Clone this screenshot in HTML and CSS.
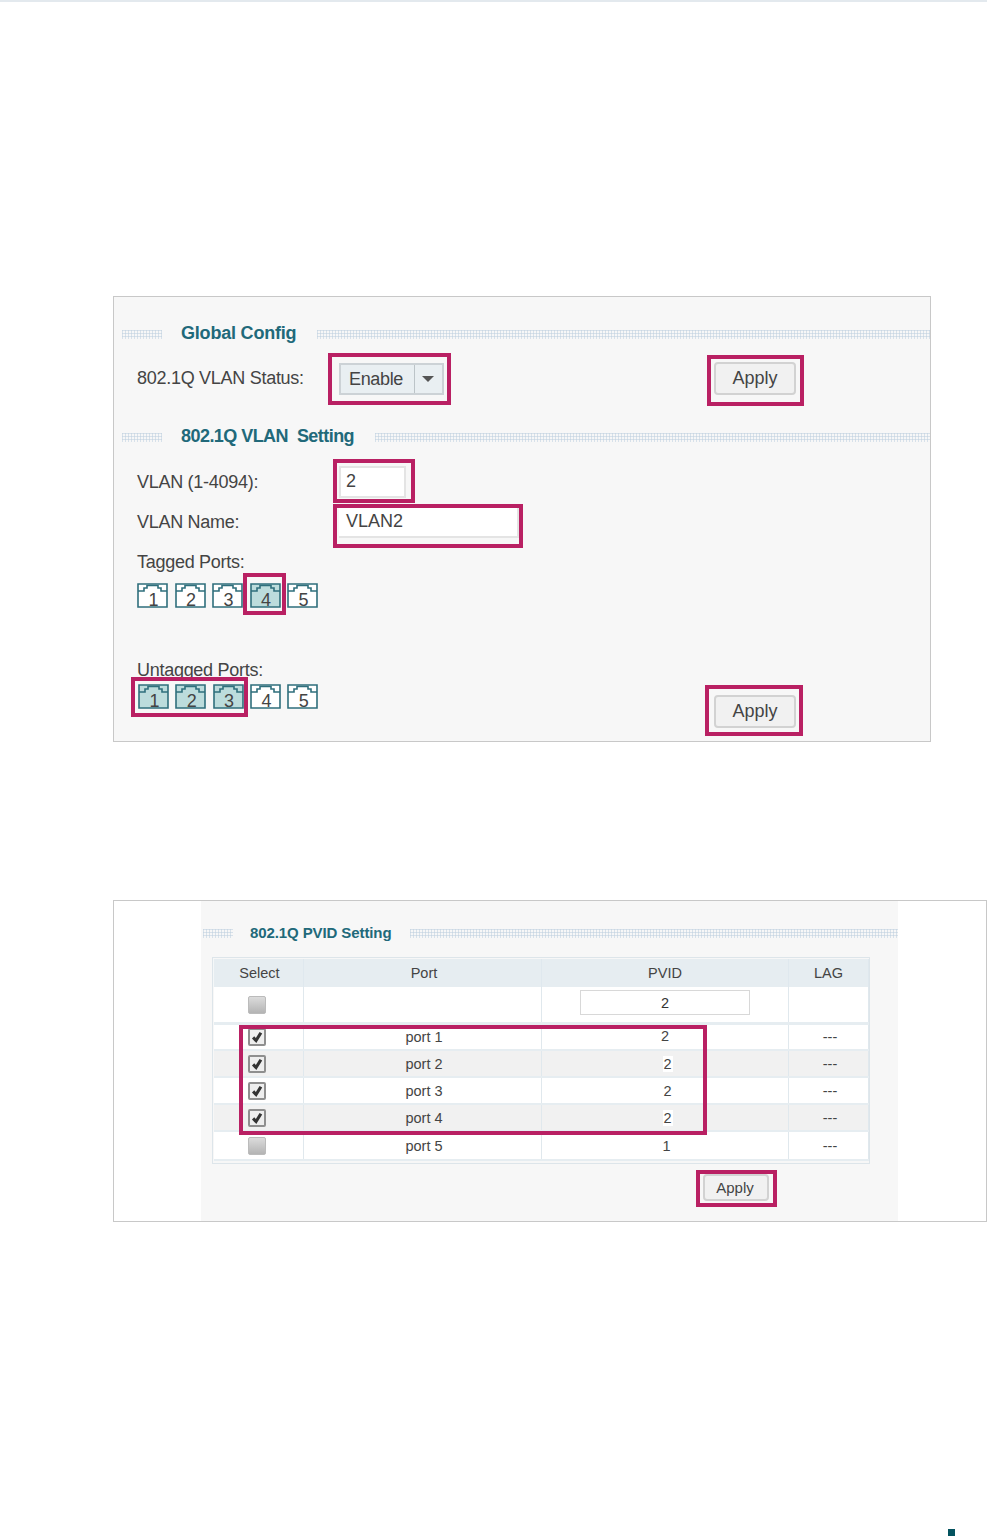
FILE: index.html
```html
<!DOCTYPE html>
<html lang="en">
<head>
    <meta charset="UTF-8">
    <meta name="viewport" content="width=device-width, initial-scale=1.0">
    <title>802.1Q VLAN Configuration</title>
    <link rel="stylesheet" href="styles.css">
</head>
<body>
    <svg class="defs" width="0" height="0" aria-hidden="true">
        <symbol id="rj45" viewBox="0 0 31 25">
            <path d="M1 1H30V24H1Z"/>
            <path d="M1 8H7V5H10V2.5H21V5H24V8H30"/>
        </symbol>
        <symbol id="tick" viewBox="0 0 18 18">
            <path d="M4 9.5L7.8 13.5L14 3.5" />
        </symbol>
    </svg>

    <div class="top-line"></div>

    <div class="panel panel-vlan">
        <div class="section-head">
            <span class="dots dots-short"></span>
            <span class="section-title">Global Config</span>
            <span class="dots"></span>
        </div>
        <div class="form-row status-row">
            <span class="label">802.1Q VLAN Status:</span>
            <div class="select">
                <span class="select-value">Enable</span>
                <span class="select-arrow"></span>
            </div>
            <button class="button apply">Apply</button>
        </div>

        <div class="section-head second-head">
            <span class="dots dots-short"></span>
            <span class="section-title tight-title">802.1Q VLAN&nbsp; Setting</span>
            <span class="dots"></span>
        </div>
        <div class="form-row vlan-row">
            <span class="label">VLAN (1-4094):</span>
            <div class="input input-id">2</div>
        </div>
        <div class="form-row name-row">
            <span class="label name-label">VLAN Name:</span>
            <div class="input input-name">VLAN2</div>
        </div>

        <div class="form-row ports-label tagged-label"><span class="label">Tagged Ports:</span></div>
        <div class="ports tagged-ports">
            <div class="port"><svg><use href="#rj45"/></svg><span>1</span></div>
            <div class="port"><svg><use href="#rj45"/></svg><span>2</span></div>
            <div class="port"><svg><use href="#rj45"/></svg><span>3</span></div>
            <div class="port on"><svg><use href="#rj45"/></svg><span>4</span></div>
            <div class="port"><svg><use href="#rj45"/></svg><span>5</span></div>
        </div>

        <div class="form-row ports-label untagged-label"><span class="label">Untagged Ports:</span></div>
        <div class="ports untagged-ports">
            <div class="port on"><svg><use href="#rj45"/></svg><span>1</span></div>
            <div class="port on"><svg><use href="#rj45"/></svg><span>2</span></div>
            <div class="port on"><svg><use href="#rj45"/></svg><span>3</span></div>
            <div class="port"><svg><use href="#rj45"/></svg><span>4</span></div>
            <div class="port"><svg><use href="#rj45"/></svg><span>5</span></div>
            <button class="button apply apply-low">Apply</button>
        </div>

        <div class="mark mark-status"></div>
        <div class="mark mark-apply-top"></div>
        <div class="mark mark-vlan"></div>
        <div class="mark mark-name"></div>
        <div class="mark mark-tagged"></div>
        <div class="mark mark-untagged"></div>
        <div class="mark mark-apply-low"></div>
    </div>

    <div class="panel panel-pvid">
        <div class="inner">
            <div class="section-head pvid-head">
                <span class="dots dots-pvid"></span>
                <span class="section-title small-title">802.1Q PVID Setting</span>
                <span class="dots"></span>
            </div>
            <div class="table-wrap">
                <table class="pvid-table">
                    <thead>
                        <tr><th class="col-select">Select</th><th class="col-port">Port</th><th class="col-pvid">PVID</th><th>LAG</th></tr>
                    </thead>
                    <tbody>
                        <tr class="row-all">
                            <td><span class="check"></span></td>
                            <td></td>
                            <td><div class="input-pvid">2</div></td>
                            <td></td>
                        </tr>
                        <tr>
                            <td><span class="check checked"><svg><use href="#tick"/></svg></span></td>
                            <td class="port-name">port 1</td><td class="first-value">2</td><td class="lag">---</td>
                        </tr>
                        <tr class="alt">
                            <td><span class="check checked"><svg><use href="#tick"/></svg></span></td>
                            <td class="port-name">port 2</td><td><span class="edited">2</span></td><td class="lag">---</td>
                        </tr>
                        <tr>
                            <td><span class="check checked"><svg><use href="#tick"/></svg></span></td>
                            <td class="port-name">port 3</td><td><span class="edited">2</span></td><td class="lag">---</td>
                        </tr>
                        <tr class="alt">
                            <td><span class="check checked"><svg><use href="#tick"/></svg></span></td>
                            <td class="port-name">port 4</td><td><span class="edited">2</span></td><td class="lag">---</td>
                        </tr>
                        <tr class="last">
                            <td><span class="check"></span></td>
                            <td class="port-name">port 5</td><td><span class="edited plain">1</span></td><td class="lag">---</td>
                        </tr>
                    </tbody>
                </table>
            </div>
            <button class="button apply-small">Apply</button>
        </div>
        <div class="mark mark-rows"></div>
        <div class="mark mark-apply-small"></div>
    </div>

    <div class="page-mark"></div>
</body>
</html>
```

FILE: styles.css
```css
body {
    font-family: "Liberation Sans", Arial, sans-serif;
    margin: 0;
    background-color: #fff;
    color: #444;
}
.defs {
    position: absolute;
}
.top-line {
    height: 2px;
    background-color: #e3e9ee;
}
.panel {
    position: relative;
    box-sizing: border-box;
    margin-left: 113px;
    border: 1px solid #c8c8c8;
}
.panel-vlan {
    width: 818px;
    height: 446px;
    margin-top: 294px;
    padding-top: 26px;
    background-color: #f7f7f7;
}
.panel-pvid {
    width: 874px;
    height: 322px;
    margin-top: 158px;
    background-color: #fff;
}

/* section headings */
.section-head {
    display: flex;
    align-items: center;
    height: 22px;
    padding-left: 8px;
}
.second-head {
    margin-top: 31px;
}
.dots {
    flex: 1;
    height: 9px;
    background-image:
        linear-gradient(90deg, rgba(190, 208, 224, 0.55) 1px, transparent 1px),
        linear-gradient(rgba(190, 208, 224, 0.55) 1px, transparent 1px);
    background-size: 3px 3px;
}
.dots-short {
    flex: none;
    width: 40px;
}
.section-title {
    margin: 0 21px 2px 19px;
    font-size: 18px;
    font-weight: bold;
    letter-spacing: -0.2px;
    color: #21697a;
    white-space: nowrap;
}
.tight-title {
    letter-spacing: -0.55px;
}

/* form rows */
.form-row {
    display: flex;
    align-items: center;
    padding: 0 134px 0 23px;
}
.label {
    flex: none;
    width: 202px;
    font-size: 18px;
    letter-spacing: -0.28px;
    white-space: nowrap;
}
.name-label {
    margin-bottom: 2px;
}
.status-row {
    height: 33px;
    margin-top: 17px;
}
.vlan-row {
    height: 32px;
    margin-top: 18px;
}
.name-row {
    height: 30px;
    margin-top: 10px;
}
.select {
    display: flex;
    box-sizing: border-box;
    width: 105px;
    height: 32px;
    border: 2px solid #ccd2d6;
    background-color: #e9eff2;
    font-size: 18px;
    letter-spacing: -0.35px;
}
.select-value {
    flex: 1;
    padding-left: 8px;
    line-height: 28px;
    border-right: 1px solid #bcc4c8;
}
.select-arrow {
    position: relative;
    width: 27px;
}
.select-arrow::after {
    content: "";
    position: absolute;
    left: 7px;
    top: 11px;
    border: 6px solid transparent;
    border-top: 6px solid #555;
    border-bottom: 0;
}
.input {
    box-sizing: border-box;
    border: 2px solid #e4e4e4;
    background-color: #fff;
    font-size: 18px;
}
.input-id {
    width: 67px;
    height: 32px;
    padding-left: 5px;
    line-height: 26px;
}
.input-name {
    width: 180px;
    height: 30px;
    padding-left: 7px;
    line-height: 26px;
    border-top: 0;
    border-left: 0;
}
.button {
    box-sizing: border-box;
    border: 2px solid #d2d2d2;
    border-radius: 4px;
    background-color: #f1f1f1;
    color: #444;
    font-family: inherit;
    padding: 0;
}
.apply {
    width: 82px;
    height: 33px;
    margin-left: auto;
    font-size: 18px;
}

/* port icons */
.ports-label {
    height: 20px;
}
.tagged-label {
    margin-top: 14px;
}
.untagged-label {
    margin-top: 52px;
}
.ports {
    display: flex;
    gap: 6.5px;
    padding: 0 134px 0 23px;
}
.tagged-ports {
    margin-top: 11px;
    height: 25px;
}
.untagged-ports {
    margin-top: 4px;
    padding-left: 24px;
    align-items: flex-start;
}
.untagged-ports .port + .port {
    margin-left: -0.2px;
}
.apply-low {
    margin-top: 11px;
}
.port {
    position: relative;
    flex: none;
    width: 31px;
    height: 25px;
}
.port svg {
    display: block;
    width: 31px;
    height: 25px;
    fill: #fff;
    stroke: #2f6f7c;
    stroke-width: 1.6;
}
.port.on svg {
    fill: #bcdcdc;
}
.port span {
    position: absolute;
    left: 2px;
    right: 0;
    bottom: -2px;
    text-align: center;
    font-size: 18px;
    line-height: 20px;
    color: #444;
}

/* PVID table */
.inner {
    box-sizing: border-box;
    width: 697px;
    height: 320px;
    margin-left: 87px;
    padding-top: 21px;
    background-color: #f7f7f7;
}
.pvid-head {
    padding-left: 2px;
}
.dots-pvid {
    flex: none;
    width: 30px;
}
.small-title {
    margin: 0 19px 2px 17px;
    font-size: 15px;
    letter-spacing: -0.1px;
}
.table-wrap {
    box-sizing: border-box;
    width: 658px;
    height: 207px;
    margin: 13px 0 0 11px;
    padding: 1px 0 0 0;
    border: 1px solid #dde5ea;
}
.pvid-table {
    width: 656px;
    table-layout: fixed;
    border-collapse: collapse;
    font-size: 14.5px;
    color: #444;
    text-align: center;
}
.pvid-table th {
    box-sizing: border-box;
    height: 28px;
    padding: 0;
    font-weight: normal;
    background-color: #e6edf1;
    border-left: 1px solid #f4f7f8;
    border-right: 1px solid #dfe8ee;
}
.pvid-table .col-select {
    width: 90px;
    padding-left: 2px;
}
.pvid-table .col-port {
    width: 238px;
    padding-left: 3px;
}
.col-pvid {
    width: 247px;
}
.pvid-table td {
    height: 27px;
    padding: 0;
    background-color: #fff;
    border-right: 1px solid #e0e8ed;
    border-bottom: 2px solid #e6edf1;
    box-sizing: border-box;
}
.pvid-table .row-all td {
    height: 36px;
    border-bottom: 3px solid #e6edf1;
}
.pvid-table .alt td {
    background-color: #f1f1f1;
}
.pvid-table .last td {
    height: 29px;
}
.pvid-table .port-name {
    padding-left: 3px;
}
.pvid-table .lag {
    padding-left: 3px;
}
.pvid-table .first-value {
    padding-bottom: 2px;
}
.check {
    display: block;
    box-sizing: border-box;
    width: 18px;
    height: 18px;
    margin: 1px 0 0 34px;
    border: 1px solid #bbb;
    border-radius: 2px;
    background-image: linear-gradient(#dcdcdc, #b4b4b4);
}
.check.checked {
    border: 2px solid #8f8f8f;
    background-image: none;
    background-color: #eee;
}
.check svg {
    display: block;
    width: 14px;
    height: 14px;
    fill: none;
    stroke: #333;
    stroke-width: 4;
}
.input-pvid {
    box-sizing: border-box;
    width: 170px;
    height: 25px;
    margin: 0 auto 3px;
    border: 1px solid #d8d8d8;
    background-color: #fff;
    line-height: 24px;
    color: #333;
}
.edited {
    display: inline-block;
    width: 10px;
    margin-left: 5px;
    background-color: #fff;
}
.edited.plain {
    margin-left: 3px;
    background-color: transparent;
}
.apply-small {
    display: block;
    width: 66px;
    height: 27px;
    margin: 10px 0 0 502px;
    padding-right: 2px;
    font-size: 15px;
}

/* highlight boxes lying over the screenshots */
.mark {
    position: absolute;
    box-sizing: border-box;
    border: 4px solid #b92063;
}
.mark-status {
    left: 214px;
    top: 56px;
    width: 123px;
    height: 52px;
}
.mark-apply-top {
    left: 593px;
    top: 58px;
    width: 97px;
    height: 51px;
}
.mark-vlan {
    left: 219px;
    top: 162px;
    width: 82px;
    height: 44px;
}
.mark-name {
    left: 219px;
    top: 207px;
    width: 190px;
    height: 44px;
}
.mark-tagged {
    left: 129px;
    top: 276px;
    width: 43px;
    height: 42px;
}
.mark-untagged {
    left: 17px;
    top: 380px;
    width: 117px;
    height: 40px;
}
.mark-apply-low {
    left: 591px;
    top: 388px;
    width: 98px;
    height: 51px;
}
.mark-rows {
    left: 125px;
    top: 124px;
    width: 468px;
    height: 110px;
}
.mark-apply-small {
    left: 582px;
    top: 269px;
    width: 81px;
    height: 37px;
}
.page-mark {
    width: 7px;
    height: 7px;
    margin: 307px 0 0 948px;
    background-color: #04535f;
}
```
